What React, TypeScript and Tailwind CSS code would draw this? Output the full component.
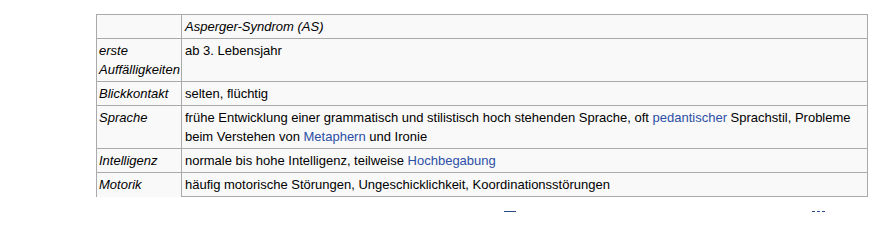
const link = "text-[#2c4fa6]";

type Row = { label: React.ReactNode; content: React.ReactNode; tall?: boolean };

const rows: Row[] = [
  { label: <>erste<br />Auffälligkeiten</>, content: "ab 3. Lebensjahr", tall: true },
  { label: "Blickkontakt", content: "selten, flüchtig" },
  {
    label: "Sprache",
    content: (
      <>
        frühe Entwicklung einer grammatisch und stilistisch hoch stehenden Sprache, oft{" "}
        <a className={link}>pedantischer</a> Sprachstil, Probleme beim Verstehen von{" "}
        <a className={link}>Metaphern</a> und Ironie
      </>
    ),
    tall: true,
  },
  {
    label: "Intelligenz",
    content: (
      <>
        normale bis hohe Intelligenz, teilweise <a className={link}>Hochbegabung</a>
      </>
    ),
  },
  { label: "Motorik", content: "häufig motorische Störungen, Ungeschicklichkeit, Koordinationsstörungen" },
];

export default function App() {
  return (
    <div className="w-[876px] h-[247px] bg-white pt-[14px] pl-[96px] font-['Liberation_Sans',Arial,sans-serif] text-[13px] leading-[19px] text-black">
      <table className="border-collapse table-fixed w-[772px] bg-[#f9f9f9]">
        <colgroup>
          <col className="w-[85px]" />
          <col />
        </colgroup>
        <tbody>
          <tr className="h-[24px]">
            <td className="border border-[#aaa]"></td>
            <td className="border border-[#aaa] px-[3px] italic align-top pt-[2px]">Asperger-Syndrom (AS)</td>
          </tr>
          {rows.map((r, i) => {
            const last = i === rows.length - 1;
            return (
              <tr key={i} className={r.tall ? "h-[43px]" : "h-[24px]"}>
                <td
                  className={
                    "border-l border-r border-t border-[#aaa] pl-[2px] pr-0 pt-[2px] italic align-top overflow-hidden whitespace-nowrap " +
                    (last ? "border-b-0" : "border-b")
                  }
                >
                  {r.label}
                </td>
                <td className="border border-[#aaa] px-[3px] pt-[2px] align-top">{r.content}</td>
              </tr>
            );
          })}
        </tbody>
      </table>
      <div className="flex mt-[14px] h-[2px]">
        <div className="ml-[408px] w-[12px] h-[1px] bg-[#2a4a8a]"></div>
        <div className="ml-[296px] w-[13px] h-[1px] border-t border-dashed border-[#2a4a8a]"></div>
      </div>
    </div>
  );
}
